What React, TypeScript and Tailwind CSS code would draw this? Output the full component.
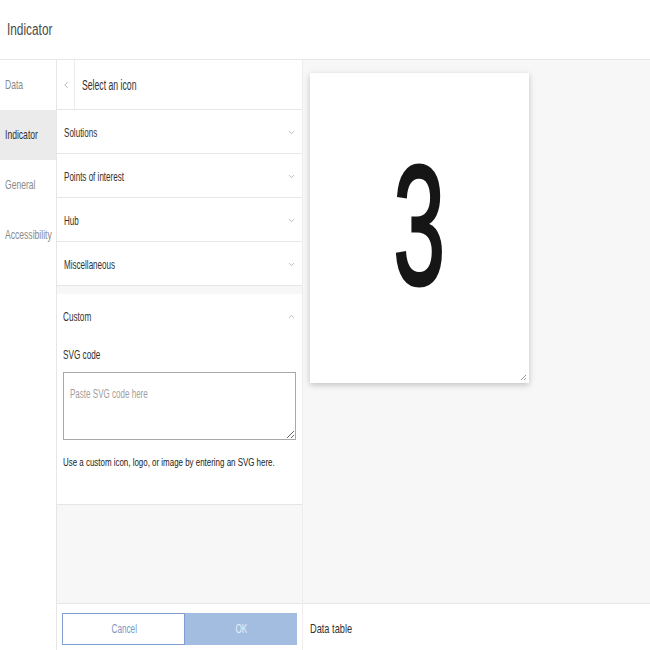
import { ChevronDown, ChevronLeft, ChevronUp } from "lucide-react";
import type { ReactNode } from "react";

const nav = ["Data", "Indicator", "General", "Accessibility"];
const groups = ["Solutions", "Points of interest", "Hub", "Miscellaneous"];

const font = { fontFamily: '"Liberation Sans", Arial, sans-serif' };

// condensed text: the UI font is a narrow one, squeeze Liberation Sans to match
function T({ children, className = "" }: { children: ReactNode; className?: string }) {
  return <span className={`inline-block whitespace-nowrap origin-left ${className}`}>{children}</span>;
}

function C({ children }: { children: ReactNode }) {
  return <span className="inline-block whitespace-nowrap origin-center scale-x-[0.63]">{children}</span>;
}

export default function App() {
  return (
    <div className="w-[650px] h-[650px] bg-white flex flex-col overflow-hidden text-[#323232]" style={font}>
      {/* Title */}
      <div className="h-[60px] flex items-center px-[7px] border-b border-[#e6e6e6] shrink-0">
        <h1 className="text-[16px] text-[#4a4a4a] pt-[1px]">
          <T className="scale-x-[0.74]">Indicator</T>
        </h1>
      </div>

      <div className="flex flex-1 min-h-0">
        {/* Side nav */}
        <div className="w-[57px] shrink-0 flex flex-col border-r border-[#e6e6e6]">
          {nav.map((n) => (
            <div
              key={n}
              className={`h-[50px] flex items-center px-[5px] text-[13px] ${
                n === "Indicator" ? "bg-[#ebebeb] text-[#323232]" : "text-[#8a8a8a]"
              }`}
            >
              <T className="scale-x-[0.66]">{n}</T>
            </div>
          ))}
        </div>

        {/* Icon picker */}
        <div className="w-[246px] shrink-0 flex flex-col bg-[#f7f7f7] border-r border-[#ededed]">
          <div className="h-[50px] flex items-center bg-white border-b border-[#e6e6e6] shrink-0">
            <div className="w-[18px] h-full flex items-center justify-center border-r border-[#ececec]">
              <ChevronLeft size={10} strokeWidth={1.5} className="text-[#8a8a8a]" />
            </div>
            <span className="pl-[7px] text-[14px] pt-[1px]">
              <T className="scale-x-[0.62]">Select an icon</T>
            </span>
          </div>

          {groups.map((g) => (
            <div
              key={g}
              className="h-[44px] flex items-center justify-between pl-[7px] pr-[6px] bg-white border-b border-[#e6e6e6] shrink-0"
            >
              <span className="text-[13px] pt-[2px]">
                <T className="scale-x-[0.62]">{g}</T>
              </span>
              <ChevronDown size={9} strokeWidth={1.5} className="text-[#8a8a8a] mt-[2px]" />
            </div>
          ))}

          <div className="mt-[8px] bg-white border-b border-[#e6e6e6] px-[6px] pt-[13px] pb-[33px] shrink-0">
            <div className="flex items-center justify-between">
              <span className="text-[13px]">
                <T className="scale-x-[0.63]">Custom</T>
              </span>
              <ChevronUp size={9} strokeWidth={1.5} className="text-[#8a8a8a]" />
            </div>
            <div className="mt-[18px] text-[13px]">
              <T className="scale-x-[0.63]">SVG code</T>
            </div>
            <div className="relative mt-[8px]">
              <textarea
                aria-label="SVG code"
                className="block w-full h-[68px] border border-[#a8a8a8] resize-y outline-none"
              />
              <span className="pointer-events-none absolute left-[7px] top-[13px] text-[12px] text-[#a0a0a0]">
                <T className="scale-x-[0.67]">Paste SVG code here</T>
              </span>
            </div>
            <p className="mt-[14px] text-[11.5px] text-[#222]">
              <T className="scale-x-[0.69]">Use a custom icon, logo, or image by entering an SVG here.</T>
            </p>
          </div>

          <div className="flex-1" />

          <div className="h-[47px] bg-white border-t border-[#e6e6e6] flex items-start pt-[9px] px-[5px] shrink-0">
            <button className="w-[124px] h-[32px] border border-[#7f9dcf] bg-white text-[13px] text-[#7b98c6]">
              <C>Cancel</C>
            </button>
            <button className="w-[112px] h-[32px] bg-[#a3bde0] text-[13px] text-[#e8eef8]">
              <C>OK</C>
            </button>
          </div>
        </div>

        {/* Preview */}
        <div className="flex-1 flex flex-col min-w-0">
          <div className="flex-1 bg-[#f7f7f7] pt-[13px] pl-[7px]">
            <div className="relative w-[219px] h-[310px] bg-white shadow-[0_2px_6px_rgba(0,0,0,0.22)] flex items-center justify-center">
              <span className="block text-[170px] leading-none text-[#161616] scale-x-[0.55] -mt-[6px] [-webkit-text-stroke:3px_#161616]">
                3
              </span>
              <svg className="absolute right-[2px] bottom-[2px]" width="7" height="7" viewBox="0 0 7 7">
                <path d="M6 1L1 6M6 4L4 6" stroke="#999" strokeWidth="1" />
              </svg>
            </div>
          </div>
          <div className="h-[47px] bg-white border-t border-[#e6e6e6] flex items-center px-[7px] shrink-0">
            <span className="text-[13px] pt-[3px]">
              <T className="scale-x-[0.71]">Data table</T>
            </span>
          </div>
        </div>
      </div>
    </div>
  );
}
